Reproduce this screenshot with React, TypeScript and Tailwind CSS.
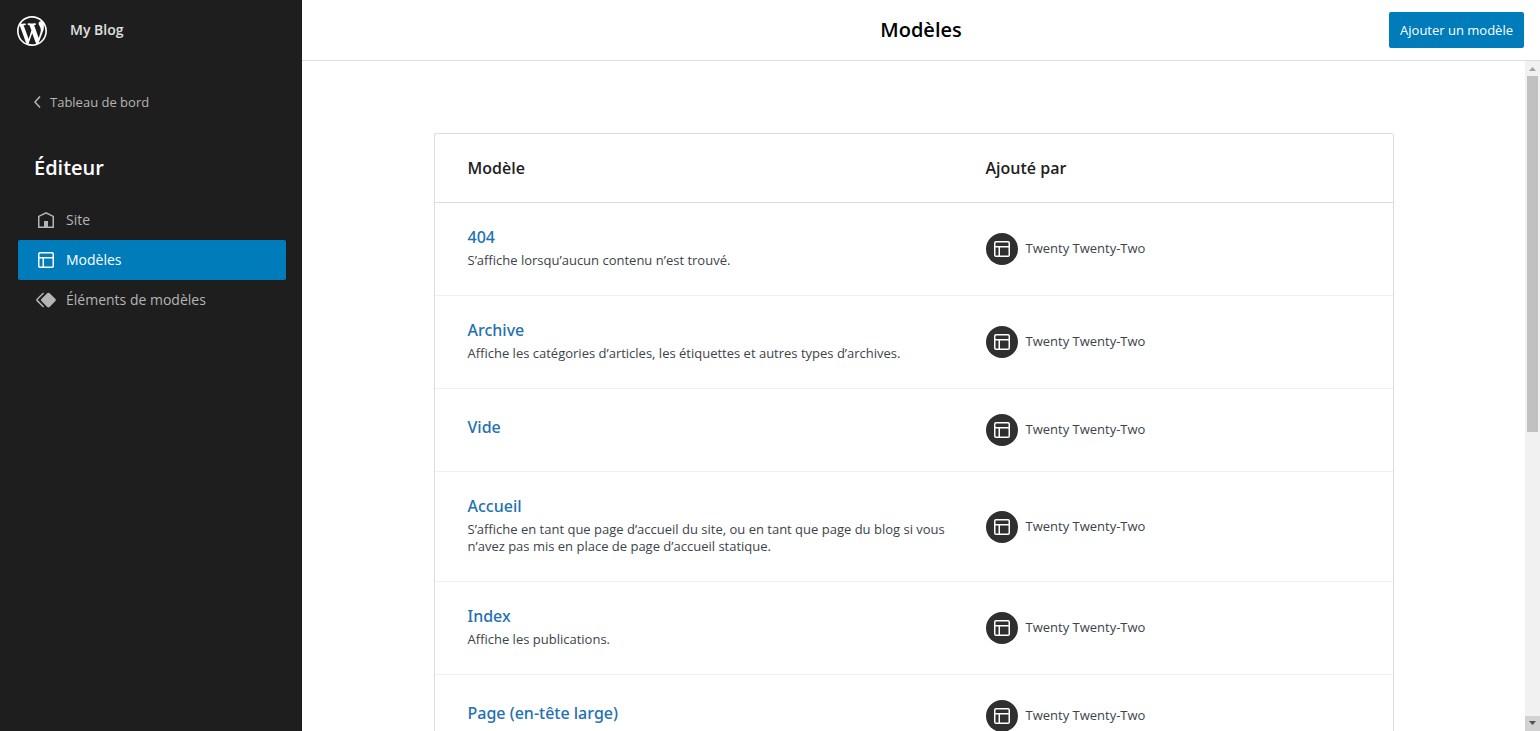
import React from 'react';

interface Template {
  title: string;
  description?: string;
  addedBy: string;
}

const templates: Template[] = [
  { title: '404', description: 'S’affiche lorsqu’aucun contenu n’est trouvé.', addedBy: 'Twenty Twenty-Two' },
  {
    title: 'Archive',
    description: 'Affiche les catégories d’articles, les étiquettes et autres types d’archives.',
    addedBy: 'Twenty Twenty-Two',
  },
  { title: 'Vide', addedBy: 'Twenty Twenty-Two' },
  {
    title: 'Accueil',
    description:
      'S’affiche en tant que page d’accueil du site, ou en tant que page du blog si vous n’avez pas mis en place de page d’accueil statique.',
    addedBy: 'Twenty Twenty-Two',
  },
  { title: 'Index', description: 'Affiche les publications.', addedBy: 'Twenty Twenty-Two' },
  { title: 'Page (en-tête large)', addedBy: 'Twenty Twenty-Two' },
];

function WordPressIcon() {
  return (
    <svg viewBox="-2 -2 24 24" className="size-9 fill-current" aria-hidden="true">
      <path d="M20 10c0-5.51-4.49-10-10-10C4.48 0 0 4.49 0 10c0 5.52 4.48 10 10 10 5.51 0 10-4.48 10-10zM7.78 15.37L4.37 6.22c.55-.02 1.17-.08 1.17-.08.5-.06.44-1.13-.06-1.11 0 0-1.45.11-2.37.11-.18 0-.37 0-.58-.01C4.12 2.69 6.87 1.11 10 1.11c2.33 0 4.45.87 6.05 2.34-.68-.11-1.65.39-1.65 1.58 0 .74.45 1.36.9 2.1.35.61.55 1.36.55 2.46 0 1.49-1.4 5-1.4 5l-3.03-8.37c.54-.02.82-.17.82-.17.5-.05.44-1.25-.06-1.22 0 0-1.44.12-2.38.12-.87 0-2.33-.12-2.33-.12-.5-.03-.56 1.2-.06 1.22l.92.08 1.26 3.41zM17.41 10c.24-.64.74-1.87.43-4.25.7 1.29 1.05 2.71 1.05 4.25 0 3.29-1.73 6.24-4.4 7.78.97-2.59 1.94-5.2 2.92-7.78zM6.1 18.09C3.12 16.65 1.11 13.53 1.11 10c0-1.3.23-2.48.72-3.59C3.25 10.3 4.67 14.2 6.1 18.09zm4.03-6.63l2.58 6.98c-.86.29-1.76.45-2.71.45-.79 0-1.57-.11-2.29-.33.81-2.38 1.62-4.74 2.42-7.1z" />
    </svg>
  );
}

function Icon({ path }: { path: string }) {
  return (
    <svg viewBox="0 0 24 24" className="size-6 shrink-0 fill-current" aria-hidden="true">
      <path d={path} />
    </svg>
  );
}

const chevronLeft = 'M14.6 7l-1.2-1L8 12l5.4 6 1.2-1-4.6-5z';
const home = 'M12 4L4 7.9V20h16V7.9L12 4zm6.5 14.5H14V13h-4v5.5H5.5V8.8L12 5.7l6.5 3.1v9.7z';
const layout =
  'M18 5.5H6a.5.5 0 00-.5.5v3h13V6a.5.5 0 00-.5-.5zm.5 5H10v8h8a.5.5 0 00.5-.5v-7.5zm-10 0h-3V18a.5.5 0 00.5.5h2.5v-8zM6 4h12a2 2 0 012 2v12a2 2 0 01-2 2H6a2 2 0 01-2-2V6a2 2 0 012-2z';
const symbolFilled =
  'M21.3 10.8l-5.6-5.6c-.7-.7-1.8-.7-2.5 0l-5.6 5.6c-.7.7-.7 1.8 0 2.5l5.6 5.6c.3.3.8.5 1.2.5s.9-.2 1.2-.5l5.6-5.6c.8-.7.8-1.9.1-2.5zm-17.6 1L10 5.5l-1-1-6.3 6.3c-.7.7-.7 1.8 0 2.5L9 19.5l1.1-1.1-6.3-6.3c-.2 0-.2-.2-.1-.3z';

const navItems = [
  { label: 'Site', icon: home, active: false },
  { label: 'Modèles', icon: layout, active: true },
  { label: 'Éléments de modèles', icon: symbolFilled, active: false },
];

function Sidebar() {
  return (
    <aside className="flex w-[302px] shrink-0 flex-col bg-[#1e1e1e] text-[#b5b5b5]">
      {/* Site hub */}
      <div className="flex h-[60px] items-center">
        <a href="#" aria-label="WordPress" className="flex h-[60px] w-16 items-center justify-center pt-px text-white">
          <WordPressIcon />
        </a>
        <span className="pl-1.5 text-sm font-semibold text-[#e0e0e0]">My Blog</span>
      </div>

      <nav className="pt-6 pr-4 pl-[18px]" aria-label="Éditeur">
        <a href="#" className="flex h-9 items-center pl-2 text-[13px] hover:text-white">
          <Icon path={chevronLeft} />
          <span className="pt-0.5">Tableau de bord</span>
        </a>
        <h2 className="mt-8 px-4 text-xl leading-8 font-semibold text-white">Éditeur</h2>
        <ul className="mt-4">
          {navItems.map((item) => (
            <li key={item.label}>
              <a
                href="#"
                aria-current={item.active ? 'page' : undefined}
                className={`flex h-10 items-center gap-2 rounded-xs px-4 text-sm ${
                  item.active ? 'bg-[#007cba] text-white' : 'hover:text-white'
                }`}
              >
                <Icon path={item.icon} />
                {item.label}
              </a>
            </li>
          ))}
        </ul>
      </nav>
    </aside>
  );
}

function TemplateTable() {
  return (
    <table className="mx-auto w-full max-w-[960px] border-separate border-spacing-0 rounded-xs border border-[#dddddd] text-left text-[13px] text-[#3c434a]">
      <thead>
        <tr className="h-[69px] text-base text-[#1e1e1e]">
          <th className="w-[519px] border-b border-[#dddddd] pr-2 pl-[33px] font-semibold">Modèle</th>
          <th className="border-b border-[#dddddd] px-8 font-semibold">Ajouté par</th>
        </tr>
      </thead>
      <tbody>
        {templates.map((template) => (
          <tr key={template.title}>
            <td className="border-b border-[#f0f0f0] pt-[23px] pr-2 pb-[26px] pl-[33px]">
              <a
                href="#"
                className="mb-1 block font-['Noto_Sans'] text-base leading-[22px] font-medium text-[#2271b1] hover:text-[#135e96]"
              >
                {template.title}
              </a>
              {template.description && <p className="leading-[17px]">{template.description}</p>}
            </td>
            <td className="border-b border-[#f0f0f0] px-8 py-[25px]">
              <span className="flex items-center gap-2">
                <span className="flex size-8 items-center justify-center rounded-full bg-[#2f2f2f] text-white">
                  <Icon path={layout} />
                </span>
                {template.addedBy}
              </span>
            </td>
          </tr>
        ))}
      </tbody>
    </table>
  );
}

function ScrollBar() {
  return (
    <div className="flex w-[15px] shrink-0 flex-col bg-[#f1f1f1]" aria-hidden="true">
      <svg viewBox="0 0 15 15" className="size-[15px] fill-[#a3a3a3]">
        <path d="M4 10L7.5 6L11 10z" />
      </svg>
      <div className="flex-1 px-0.5">
        <div className="h-5/9 bg-[#c1c1c1]" />
      </div>
      <svg viewBox="0 0 15 15" className="size-[15px] bg-[#d2d2d2] fill-[#505050]">
        <path d="M4 5L7.5 9L11 5z" />
      </svg>
    </div>
  );
}

export default function App() {
  return (
    <div className="flex h-screen overflow-hidden bg-white font-['Open_Sans',sans-serif]">
      <Sidebar />
      <main className="flex min-w-0 flex-1 flex-col">
        {/* Header */}
        <header className="grid h-[61px] shrink-0 grid-cols-[1fr_auto_1fr] items-center border-b border-[#dddddd] px-4">
          <h1 className="col-start-2 text-xl font-semibold text-black">Modèles</h1>
          <button
            type="button"
            className="h-9 justify-self-end rounded-xs bg-[#007cba] px-[11px] pt-0.5 text-[13px] text-white hover:bg-[#006ba1]"
          >
            Ajouter un modèle
          </button>
        </header>

        <div className="flex min-h-0 flex-1">
          <div className="min-w-0 flex-1 overflow-y-auto px-4 py-[72px] [scrollbar-width:none]">
            <TemplateTable />
          </div>
          <ScrollBar />
        </div>
      </main>
    </div>
  );
}
